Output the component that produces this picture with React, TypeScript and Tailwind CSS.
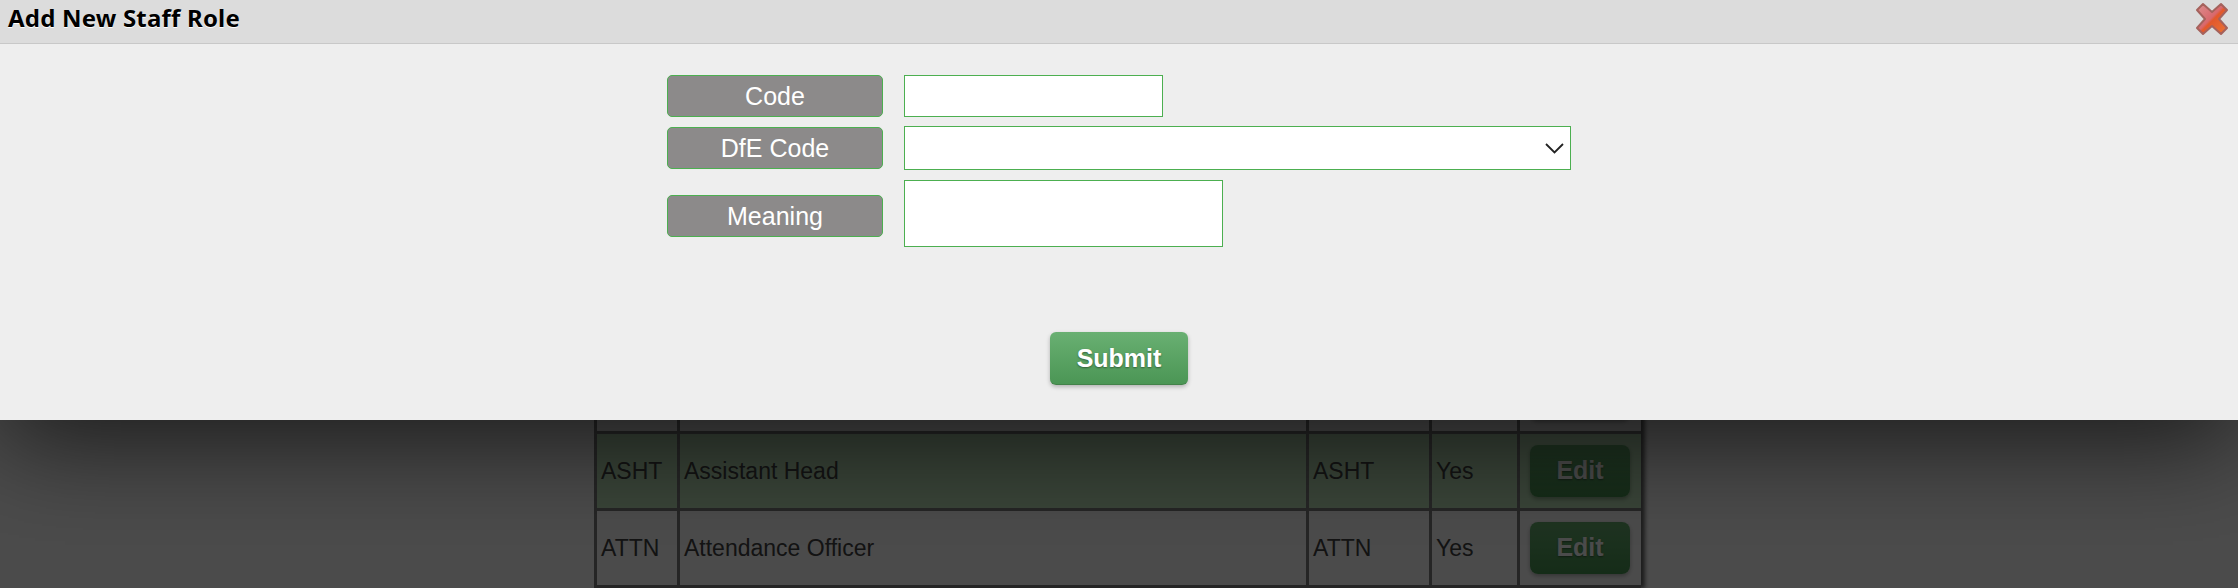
const rows = [
  { code: "ASHT", meaning: "Assistant Head", dfe: "ASHT", active: "Yes", shade: "bg-[#c2e8bf]" },
  { code: "ATTN", meaning: "Attendance Officer", dfe: "ATTN", active: "Yes", shade: "bg-white" },
];

const cols = "grid grid-cols-[80px_626px_120px_85px_121px] gap-x-[3px]";
const editBtn =
  "h-[52px] w-[100px] rounded-[8px] bg-gradient-to-b from-[#69b072] to-[#4b9655] text-[25px] font-bold text-white shadow-[0_2px_4px_rgba(0,0,0,0.3)] [text-shadow:0_1px_2px_rgba(0,0,0,0.4)]";

function FieldLabel({ text }: { text: string }) {
  return (
    <div className="flex h-[42px] w-[216px] shrink-0 items-center justify-center rounded-[5px] border border-[#4caf50] bg-[#8c8a8a] pt-[2px] text-[25px] text-white">
      {text}
    </div>
  );
}

function CloseIcon() {
  return (
    <svg width="34" height="34" viewBox="0 0 34 34" className="mt-[2px]">
      <defs>
        <linearGradient id="closeFill" x1="0" y1="0" x2="1" y2="1">
          <stop offset="0" stopColor="#dc8f90" />
          <stop offset="0.47" stopColor="#d8686c" />
          <stop offset="0.53" stopColor="#e2582c" />
          <stop offset="1" stopColor="#ea7436" />
        </linearGradient>
      </defs>
      <path
        d="M8 2 L17 10 L26 2 L32 8 L24 17 L32 26 L26 32 L17 24 L8 32 L2 26 L10 17 L2 8 Z"
        fill="url(#closeFill)"
        stroke="#a5625c"
        strokeWidth="2"
        strokeLinejoin="round"
      />
    </svg>
  );
}

export default function App() {
  return (
    <div className="relative flex h-[588px] flex-col overflow-hidden bg-white font-['Liberation_Sans',Arial,sans-serif]">
      <div className="relative z-20 h-[420px] shrink-0 bg-[#eeeeee] shadow-[0_20px_100px_rgba(0,0,0,0.67)]">
        <div className="flex h-[44px] items-start justify-between border-b border-[#c8c8c8] bg-[#dcdcdc] pl-2 pr-[9px]">
          <h1 className="font-['Noto_Sans',sans-serif] text-[24px] leading-[36px] font-bold tracking-[0.2px] text-black [text-shadow:0_1px_0_#ffffff]">
            Add New Staff Role
          </h1>
          <CloseIcon />
        </div>

        <form className="ml-[667px] pt-[31px]">
          <div className="flex gap-[21px]">
            <FieldLabel text="Code" />
            <input className="h-[42px] w-[259px] border border-[#4caf50] bg-white" />
          </div>
          <div className="mt-[9px] flex items-center gap-[21px]">
            <FieldLabel text="DfE Code" />
            <div className="flex h-[44px] w-[667px] items-center justify-end border border-[#4caf50] bg-white pr-[6px]">
              <svg width="19" height="11" viewBox="0 0 19 11" fill="none" stroke="#222222" strokeWidth="1.8">
                <path d="M1 1 L9.5 9.5 L18 1" />
              </svg>
            </div>
          </div>
          <div className="mt-[10px] flex items-start gap-[21px]">
            <div className="mt-[15px]">
              <FieldLabel text="Meaning" />
            </div>
            <textarea className="h-[67px] w-[319px] resize-none border border-[#4caf50] bg-white" />
          </div>
        </form>

        <div className="mt-[85px] flex justify-center">
          <button className="h-[53px] w-[138px] rounded-[6px] border-b border-[#43824a] bg-gradient-to-b from-[#69b072] to-[#4b9655] pt-[1px] text-[25px] font-bold text-white shadow-[0_2px_4px_rgba(0,0,0,0.25)] [text-shadow:0_1px_2px_rgba(0,0,0,0.4)]">
            Submit
          </button>
        </div>
      </div>

      {/* table sits behind the dialog, its first row mostly hidden */}
      <div className="mt-[-63px] ml-[594px] w-[1047px] border-x-[3px] border-b-[3px] border-[#808080] bg-[#808080] shadow-[4px_0_4px_rgba(0,0,0,0.6)]">
        <div className={`${cols} h-[74px]`}>
          <div className="bg-white" />
          <div className="bg-white" />
          <div className="bg-white" />
          <div className="bg-white" />
          <div className="flex items-center bg-white pl-[10px]">
            <div className={editBtn} />
          </div>
        </div>
        {rows.map((row) => (
          <div key={row.code} className={`${cols} mt-[3px] h-[74px] text-[23px] text-[#444444]`}>
            <div className={`${row.shade} flex items-center pl-[4px]`}>{row.code}</div>
            <div className={`${row.shade} flex items-center pl-[4px]`}>{row.meaning}</div>
            <div className={`${row.shade} flex items-center pl-[4px]`}>{row.dfe}</div>
            <div className={`${row.shade} flex items-center pl-[4px]`}>{row.active}</div>
            <div className={`${row.shade} flex items-center pl-[10px]`}>
              <button className={editBtn}>Edit</button>
            </div>
          </div>
        ))}
      </div>

      <div className="absolute inset-0 z-10 bg-black/70" />
    </div>
  );
}
